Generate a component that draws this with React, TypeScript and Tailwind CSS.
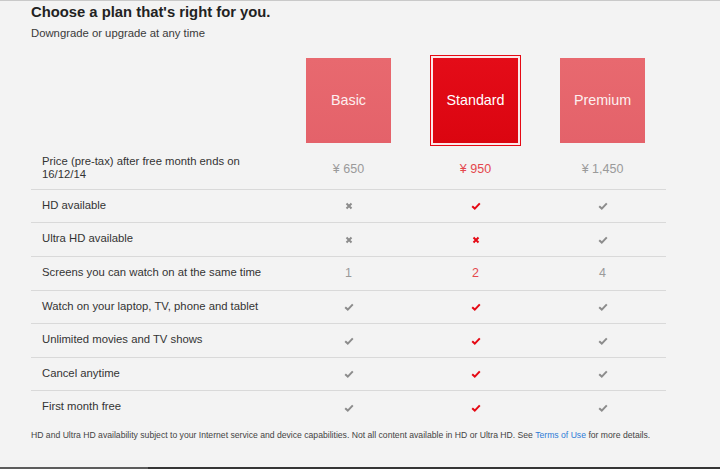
type Cell = { kind: "check" | "cross" | "text"; value?: string };

const plans = ["Basic", "Standard", "Premium"];

const rows: { label: string; h: string; cells: Cell[] }[] = [
  {
    label: "HD available",
    h: "h-[33px]",
    cells: [{ kind: "cross" }, { kind: "check" }, { kind: "check" }],
  },
  {
    label: "Ultra HD available",
    h: "h-[34px]",
    cells: [{ kind: "cross" }, { kind: "cross" }, { kind: "check" }],
  },
  {
    label: "Screens you can watch on at the same time",
    h: "h-[34px]",
    cells: [
      { kind: "text", value: "1" },
      { kind: "text", value: "2" },
      { kind: "text", value: "4" },
    ],
  },
  {
    label: "Watch on your laptop, TV, phone and tablet",
    h: "h-[33px]",
    cells: [{ kind: "check" }, { kind: "check" }, { kind: "check" }],
  },
  {
    label: "Unlimited movies and TV shows",
    h: "h-[34px]",
    cells: [{ kind: "check" }, { kind: "check" }, { kind: "check" }],
  },
  {
    label: "Cancel anytime",
    h: "h-[33px]",
    cells: [{ kind: "check" }, { kind: "check" }, { kind: "check" }],
  },
  {
    label: "First month free",
    h: "h-[34px]",
    cells: [{ kind: "check" }, { kind: "check" }, { kind: "check" }],
  },
];

function Check({ red }: { red: boolean }) {
  return (
    <svg width="10" height="8" viewBox="0 0 10 8">
      <path
        d="M1.2 4.2 L3.8 6.6 L8.8 1.4"
        fill="none"
        stroke={red ? "#e50914" : "#8c8c8c"}
        strokeWidth="2"
      />
    </svg>
  );
}

function Cross({ red }: { red: boolean }) {
  return (
    <svg width="8" height="8" viewBox="0 0 8 8">
      <path
        d="M1.5 1.5 L6.5 6.5 M6.5 1.5 L1.5 6.5"
        fill="none"
        stroke={red ? "#e50914" : "#8c8c8c"}
        strokeWidth="2"
      />
    </svg>
  );
}

function CellView({ cell, red }: { cell: Cell; red: boolean }) {
  if (cell.kind === "check") return <Check red={red} />;
  if (cell.kind === "cross") return <Cross red={red} />;
  return (
    <span className={`text-[12.5px] ${red ? "text-[#e4474d]" : "text-[#9a9a9a]"}`}>
      {cell.value}
    </span>
  );
}

export default function App() {
  return (
    <div className="flex h-[469px] flex-col bg-[#f3f3f3] font-['Liberation_Sans',Arial,sans-serif] text-[#333]">
      <div className="h-px bg-[#c9c9c9]" />
      <div className="flex-1 pl-[31px]">
        <h1 className="mt-[3px] text-[14.8px] font-bold leading-[17px] text-[#222]">
          Choose a plan that's right for you.
        </h1>
        <p className="mt-[6px] text-[11.3px] leading-[13px] text-[#3a3a3a]">
          Downgrade or upgrade at any time
        </p>

        <div className="mt-[15px] w-[635px]">
          <div className="grid h-[91px] grid-cols-[254px_127px_127px_127px] items-center">
            <div />
            {plans.map((p) =>
              p === "Standard" ? (
                <div key={p} className="flex justify-center">
                  <div className="border border-[#e50914] bg-[#fbe9ea] p-[2px]">
                    <div className="flex h-[85px] w-[85px] items-center justify-center bg-gradient-to-b from-[#e40c18] to-[#db0510] pt-px text-[14.3px] text-white">
                      {p}
                    </div>
                  </div>
                </div>
              ) : (
                <div key={p} className="flex justify-center">
                  <div className="flex h-[85px] w-[85px] items-center justify-center bg-gradient-to-b from-[#e8696f] to-[#e4626a] pt-px text-[14.3px] text-[#fdf0f0]">
                    {p}
                  </div>
                </div>
              )
            )}
          </div>

          <div className="grid h-[43px] grid-cols-[254px_127px_127px_127px] items-center">
            <div className="pl-[11px] pr-[20px] text-[11.3px] leading-[13px]">
              Price (pre-tax) after free month ends on 16/12/14
            </div>
            <div className="pt-[3px] text-center text-[12.5px] text-[#9a9a9a]">¥ 650</div>
            <div className="pt-[3px] text-center text-[12.5px] text-[#e4474d]">¥ 950</div>
            <div className="pt-[3px] text-center text-[12.5px] text-[#9a9a9a]">¥ 1,450</div>
          </div>

          {rows.map((r) => (
            <div
              key={r.label}
              className={`grid grid-cols-[254px_127px_127px_127px] items-center border-t border-[#d9d9d9] ${r.h}`}
            >
              <div className="pb-[2px] pl-[11px] text-[11.3px] leading-[13px]">{r.label}</div>
              {r.cells.map((c, j) => (
                <div key={j} className="flex justify-center">
                  <CellView cell={c} red={j === 1} />
                </div>
              ))}
            </div>
          ))}
        </div>

        <p className="mt-[6px] text-[8.65px] leading-[11px] text-[#444]">
          HD and Ultra HD availability subject to your Internet service and device capabilities. Not
          all content available in HD or Ultra HD. See{" "}
          <span className="text-[#2e7bd6]">Terms of Use</span> for more details.
        </p>
      </div>
      <div className="flex h-[2px]">
        <div className="w-[148px] bg-[#5c5c5c]" />
        <div className="flex-1 bg-[#353535]" />
      </div>
    </div>
  );
}
